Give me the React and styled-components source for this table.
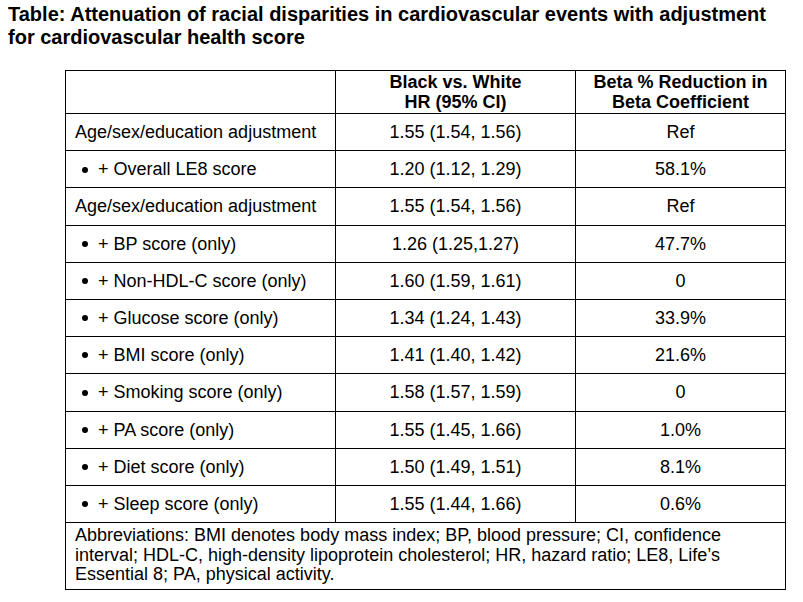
import React from 'react';
import styled, { createGlobalStyle } from 'styled-components';

const GlobalStyle = createGlobalStyle`
  html, body {
    margin: 0;
    padding: 0;
    background: #fff;
  }
  body {
    font-family: "Liberation Sans", Arial, sans-serif;
    color: #000;
  }
`;

const rows = [
  { label: 'Age/sex/education adjustment', hr: '1.55 (1.54, 1.56)', beta: 'Ref' },
  { label: '+ Overall LE8 score', hr: '1.20 (1.12, 1.29)', beta: '58.1%', bullet: true },
  { label: 'Age/sex/education adjustment', hr: '1.55 (1.54, 1.56)', beta: 'Ref' },
  { label: '+ BP score (only)', hr: '1.26 (1.25,1.27)', beta: '47.7%', bullet: true },
  { label: '+ Non-HDL-C score (only)', hr: '1.60 (1.59, 1.61)', beta: '0', bullet: true },
  { label: '+ Glucose score (only)', hr: '1.34 (1.24, 1.43)', beta: '33.9%', bullet: true },
  { label: '+ BMI score (only)', hr: '1.41 (1.40, 1.42)', beta: '21.6%', bullet: true },
  { label: '+ Smoking score (only)', hr: '1.58 (1.57, 1.59)', beta: '0', bullet: true },
  { label: '+ PA score (only)', hr: '1.55 (1.45, 1.66)', beta: '1.0%', bullet: true },
  { label: '+ Diet score (only)', hr: '1.50 (1.49, 1.51)', beta: '8.1%', bullet: true },
  { label: '+ Sleep score (only)', hr: '1.55 (1.44, 1.66)', beta: '0.6%', bullet: true },
];

const App = () => {
  return (
    <>
      <GlobalStyle />
      <Page>
        <Title>
          Table: Attenuation of racial disparities in cardiovascular events with adjustment
          for cardiovascular health score
        </Title>
        <Table>
          <colgroup>
            <col style={{ width: 270 }} />
            <col style={{ width: 240 }} />
            <col style={{ width: 210 }} />
          </colgroup>
          <thead>
            <tr>
              <HeadCell />
              <HeadCell>Black vs. White<br />HR (95% CI)</HeadCell>
              <HeadCell>Beta % Reduction in<br />Beta Coefficient</HeadCell>
            </tr>
          </thead>
          <tbody>
            {rows.map((r, i) => (
              <Row key={i}>
                <LabelCell>
                  {r.bullet && <Bullet />}
                  {r.label}
                </LabelCell>
                <ValueCell>{r.hr}</ValueCell>
                <ValueCell>{r.beta}</ValueCell>
              </Row>
            ))}
            <tr>
              <Footnote colSpan={3}>
                Abbreviations: BMI denotes body mass index; BP, blood pressure; CI, confidence
                interval; HDL-C, high-density lipoprotein cholesterol; HR, hazard ratio; LE8, Life’s
                Essential 8; PA, physical activity.
              </Footnote>
            </tr>
          </tbody>
        </Table>
      </Page>
    </>
  );
};

const Page = styled.div`
  width: 803px;
  height: 602px;
  padding: 3px 0 0 8px;
  box-sizing: border-box;
  overflow: hidden;
`;

const Title = styled.h1`
  margin: 0;
  width: 780px;
  font-size: 20px;
  line-height: 23px;
  font-weight: bold;
`;

const Table = styled.table`
  margin: 21px 0 0 57px;
  width: 721px;
  border-collapse: collapse;
  table-layout: fixed;
  font-size: 18px;
`;

const HeadCell = styled.th`
  border: 1px solid #000;
  height: 42px;
  padding: 0 4px;
  font-weight: bold;
  line-height: 20px;
  text-align: center;
  vertical-align: middle;
`;

const Row = styled.tr`
  height: 37.2px;
`;

const LabelCell = styled.td`
  border: 1px solid #000;
  padding: 0 0 0 9px;
  line-height: 20px;
  white-space: nowrap;
`;

const Bullet = styled.span`
  display: inline-block;
  width: 6px;
  height: 6px;
  margin: 0 10px 2px 7px;
  border-radius: 50%;
  background: #000;
  vertical-align: middle;
`;

const ValueCell = styled.td`
  border: 1px solid #000;
  padding: 0;
  text-align: center;
  line-height: 20px;
`;

const Footnote = styled.td`
  border: 1px solid #000;
  padding: 3px 8px 4px 9px;
  line-height: 19.5px;
`;

export default App;
